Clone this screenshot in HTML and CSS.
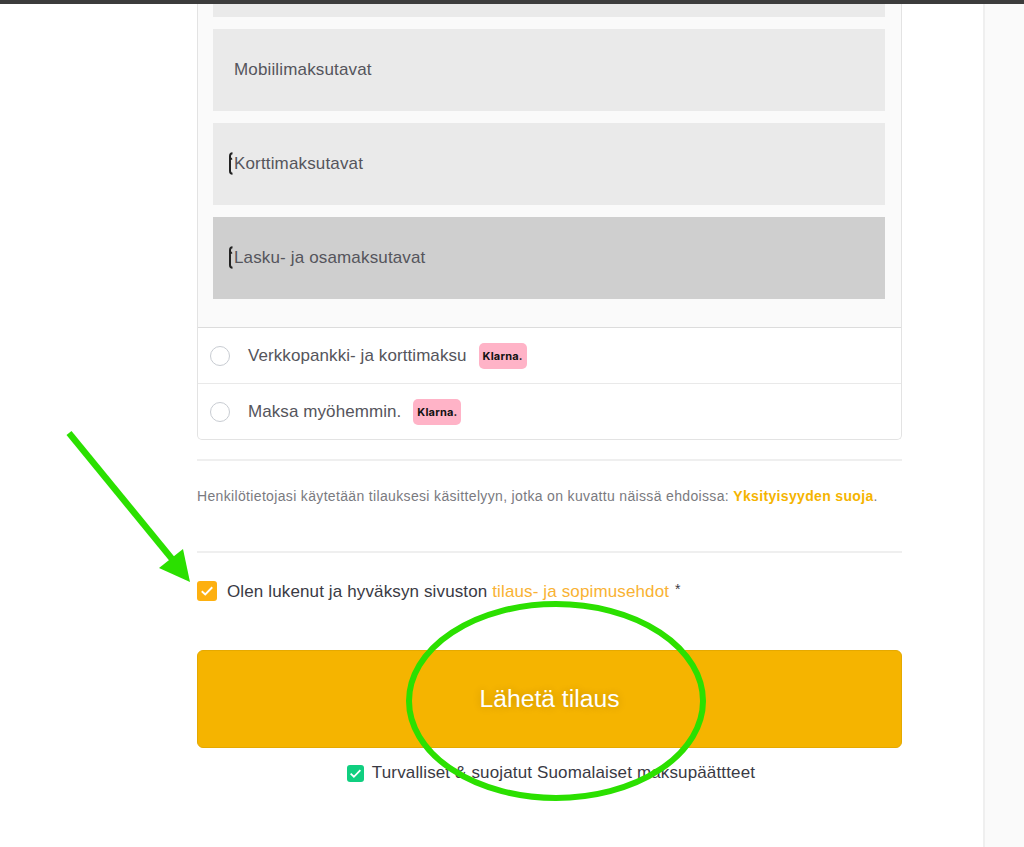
FILE: index.html
```html
<!DOCTYPE html>
<html lang="en">
<head>
  <meta charset="UTF-8" />
  <meta name="viewport" content="width=device-width, initial-scale=1.0" />
  <title>Kassa</title>
  <link rel="stylesheet" href="styles.css">
</head>
<body>
  <div class="topbar"></div>
  <div class="page">
    <main class="checkout">
      <div class="methods">
        <div class="group-panel">
          <div class="group group-cut"></div>
          <div class="group"><span class="group-label">Mobiilimaksutavat</span></div>
          <div class="group">
            <svg class="group-mark" width="6" height="23" viewBox="0 0 6 23"><path d="M4.500 1.200C2.500 1.200 2 2.500 2 4V19C2 20.700 2.500 21.800 4.500 21.800M2 7.500L4 6.300" fill="none" stroke="#222" stroke-width="2"/></svg>
            <span class="group-label">Korttimaksutavat</span>
          </div>
          <div class="group group-active">
            <svg class="group-mark" width="6" height="23" viewBox="0 0 6 23"><path d="M4.500 1.200C2.500 1.200 2 2.500 2 4V19C2 20.700 2.500 21.800 4.500 21.800M2 7.500L4 6.300" fill="none" stroke="#222" stroke-width="2"/></svg>
            <span class="group-label">Lasku- ja osamaksutavat</span>
          </div>
        </div>
        <div class="method">
          <span class="radio"></span>
          <span>Verkkopankki- ja korttimaksu</span>
          <span class="klarna">Klarna.</span>
        </div>
        <div class="method">
          <span class="radio"></span>
          <span>Maksa myöhemmin.</span>
          <span class="klarna">Klarna.</span>
        </div>
      </div>

      <p class="privacy">Henkilötietojasi käytetään tilauksesi käsittelyyn, jotka on kuvattu näissä ehdoissa: <a class="privacy-link">Yksityisyyden suoja</a>.</p>

      <div class="terms">
        <span class="check check-orange">
          <svg width="14" height="12" viewBox="0 0 12 10"><path d="M1.500 5.200L4.500 8L10.500 1.800" fill="none" stroke="#fff" stroke-width="1.600"/></svg>
        </span>
        <span class="terms-text">Olen lukenut ja hyväksyn sivuston <a class="terms-link">tilaus- ja sopimusehdot</a> <span class="req">*</span></span>
      </div>

      <button class="submit">Lähetä tilaus</button>

      <div class="secure">
        <span class="check check-green">
          <svg width="13" height="11" viewBox="0 0 12 10"><path d="M1.500 5.200L4.500 8L10.500 1.800" fill="none" stroke="#fff" stroke-width="1.600"/></svg>
        </span>
        <span>Turvalliset &amp; suojatut Suomalaiset maksupäättteet</span>
      </div>
    </main>
    <aside class="side"></aside>
  </div>

  <!-- green markings drawn on top of the screenshot -->
  <svg class="markup" width="1024" height="847" viewBox="0 0 1024 847">
    <line x1="69" y1="433" x2="177" y2="565" stroke="#2be000" stroke-width="6.500"/>
    <polygon points="190,582 159,568 183,549" fill="#2be000"/>
    <ellipse cx="556" cy="701" rx="147" ry="97" fill="none" stroke="#2be000" stroke-width="6"/>
  </svg>
</body>
</html>
```

FILE: styles.css
```css
body {
  font-family: "Liberation Sans", Arial, sans-serif;
  margin: 0;
  padding: 0;
  background: #fff;
  color: #3a3a44;
  height: 847px;
  overflow: hidden;
}
.topbar {
  height: 4px;
  background: #3c3c3c;
}
.page {
  display: flex;
  height: 843px;
}
.checkout {
  width: 705px;
  margin-left: 197px;
}
.methods {
  border: 1px solid #e3e3e3;
  border-top: 0;
  border-radius: 0 0 5px 5px;
}
.group-panel {
  background: #fafafa;
  padding: 0 16px 28px 15px;
  border-bottom: 1px solid #dcdcdc;
}
.group {
  position: relative;
  display: flex;
  align-items: center;
  height: 82px;
  padding-left: 21px;
  margin-bottom: 12px;
  background: #eaeaea;
  color: #55555c;
  font-size: 17px;
  letter-spacing: 0.15px;
}
.group:last-child {
  margin-bottom: 0;
}
.group-cut {
  height: 13px;
  margin-bottom: 12px;
}
.group-active {
  background: #cfcfcf;
}
.group-mark {
  position: absolute;
  left: 15px;
  top: 29px;
}
.method {
  display: flex;
  align-items: center;
  height: 55px;
  padding-left: 13px;
  font-size: 17px;
  letter-spacing: 0.08px;
  color: #55555c;
}
.method + .method {
  border-top: 1px solid #e9e9e9;
}
.radio {
  width: 18px;
  height: 18px;
  border: 1px solid #c8ccd2;
  border-radius: 50%;
  background: #fff;
  margin-right: 18px;
  margin-left: -1px;
}
.klarna {
  display: flex;
  align-items: center;
  justify-content: center;
  width: 48px;
  height: 26px;
  margin-left: 12px;
  border-radius: 5px;
  background: #ffb3c7;
  color: #111;
  font-family: Inter, sans-serif;
  font-size: 11px;
  font-weight: 700;
  letter-spacing: 0.2px;
}
.privacy {
  margin: 19px 0 0;
  padding: 27px 0 47px;
  border-top: 2px solid #efefef;
  border-bottom: 2px solid #efefef;
  font-size: 14px;
  letter-spacing: 0.34px;
  line-height: 16px;
  color: #7a7a80;
}
.privacy-link {
  color: #f5b400;
  font-weight: bold;
}
.terms {
  display: flex;
  align-items: center;
  gap: 10px;
  margin-top: 27px;
  height: 22px;
  font-size: 17px;
  letter-spacing: 0.13px;
  color: #3a3a44;
}
.terms-text {
  margin-top: 2px;
}
.terms-link {
  color: #f9b233;
}
.req {
  position: relative;
  top: -3px;
  font-size: 14px;
  margin-left: 1px;
}
.check {
  display: flex;
  align-items: center;
  justify-content: center;
  flex: none;
  width: 20px;
  height: 20px;
  border-radius: 3px;
}
.check-orange {
  background: #fdb010;
}
.check-green {
  width: 17px;
  height: 17px;
  background: #10cf80;
}
.submit {
  display: block;
  width: 100%;
  height: 98px;
  margin-top: 48px;
  border: 1px solid #e5a900;
  border-radius: 6px;
  background: #f5b400;
  color: #fff;
  font-family: inherit;
  font-size: 24.700px;
  text-shadow: 0 0 8px rgba(0, 0, 0, 0.2);
  cursor: pointer;
}
.secure {
  display: flex;
  align-items: center;
  justify-content: center;
  gap: 8px;
  margin-top: 15px;
  padding-left: 3px;
  height: 20px;
  font-size: 17px;
  letter-spacing: 0.14px;
  color: #3a3a44;
}
.side {
  width: 40px;
  margin-left: 81px;
  flex: 1;
  background: #fafafa;
  border-left: 2px solid #efefef;
}
.markup {
  position: absolute;
  left: 0;
  top: 0;
  pointer-events: none;
}
```
